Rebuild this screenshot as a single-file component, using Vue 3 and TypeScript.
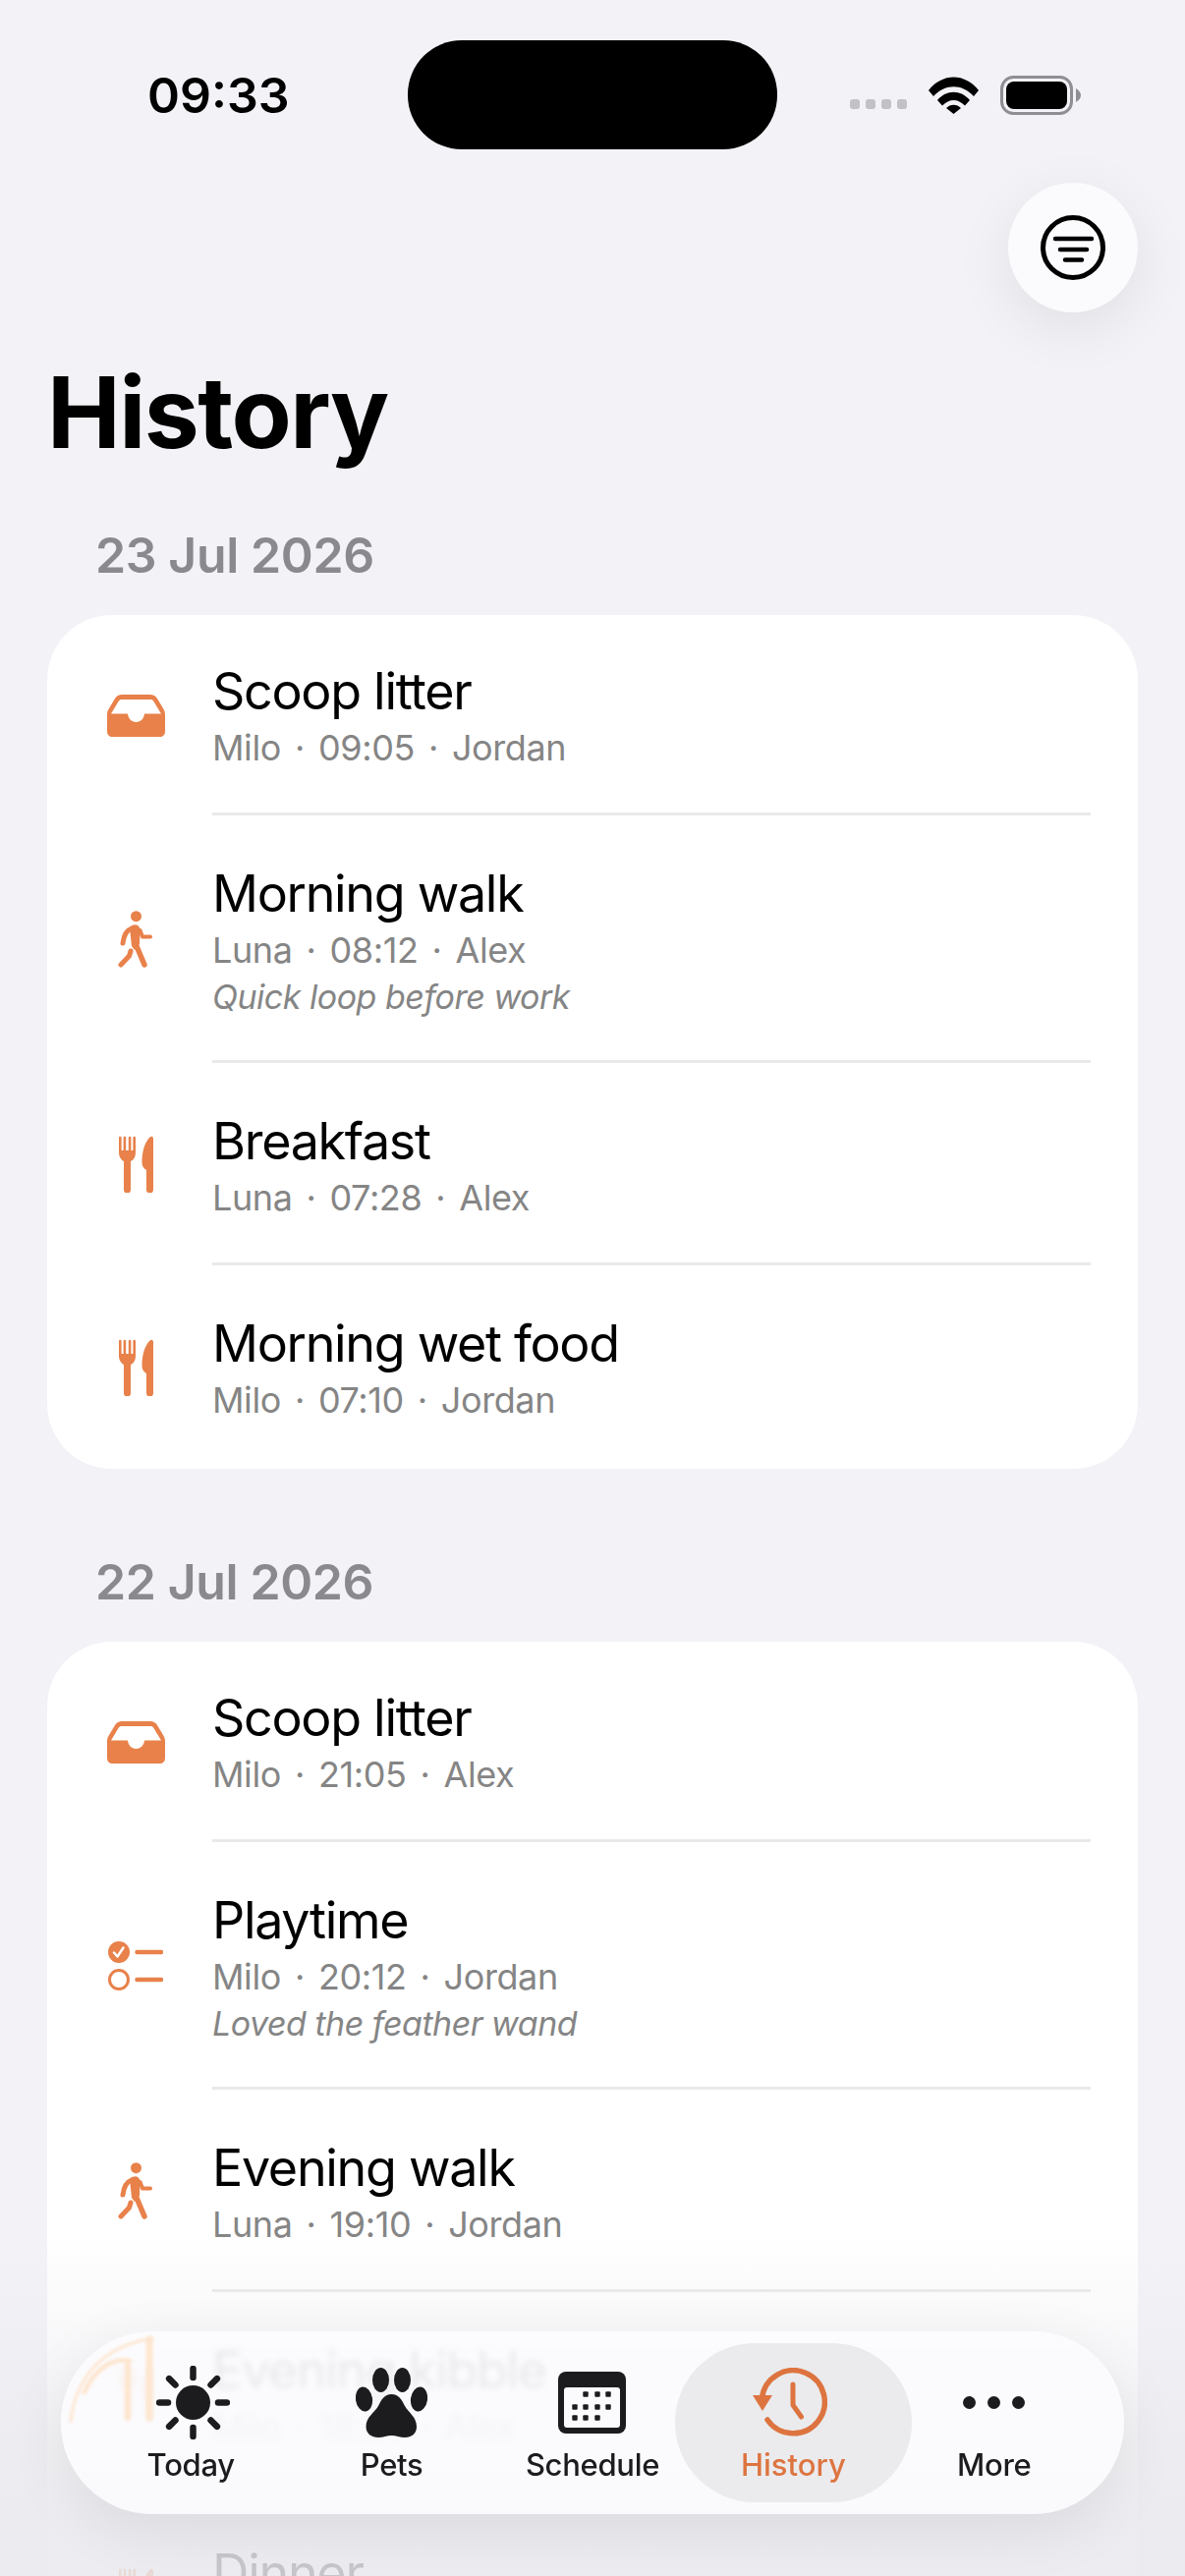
<template>
  <div class="screen">
    <header class="status">
      <span class="clock">09:33</span>
      <div class="island" />
      <div class="status-icons">
        <div class="signal"><i /><i /><i /><i /></div>
        <svg class="wifi" width="51" height="38" viewBox="0 0 51 38">
          <path d="M0 14 C14 -4 37 -4 51 14 L46 20 C34 7 17 7 5 20Z" />
          <path d="M9 24 C18 13 33 13 42 24 L37 29.5 C30 22 21 22 14 29.5Z" />
          <path d="M18 32 C22 27.5 29 27.5 33 32 L25.500 38Z" />
        </svg>
        <svg class="battery" width="82" height="40" viewBox="0 0 82 40">
          <rect x="1.500" y="1.500" width="71" height="37" rx="12" fill="none" stroke="#8f8f93" stroke-width="3" />
          <rect x="6" y="6" width="62" height="28" rx="8" />
          <path d="M77 13 C80 15 82 17 82 20 C82 23 80 25 77 27Z" fill="#8f8f93" />
        </svg>
      </div>
    </header>

    <div class="toolbar">
      <button class="filter-btn">
        <svg width="66" height="66" viewBox="0 0 66 66" fill="none" stroke="#000" stroke-linecap="round">
          <circle cx="33" cy="33" r="30.500" stroke-width="5" />
          <path d="M15 24H52M20 35H47M25 45.500H42" stroke-width="4.500" />
        </svg>
      </button>
    </div>

    <h1 class="title">History</h1>

    <section v-for="day in days" :key="day.date" class="day">
      <h2 class="day-label">{{ day.date }}</h2>
      <div class="card">
        <div v-for="entry in day.entries" :key="entry.title" class="row">
          <div class="row-icon">
            <svg v-if="entry.kind === 'litter'" width="59" height="43" viewBox="0 0 59 43">
              <path fill-rule="evenodd" d="M15 0H44C47 0 49 1 51 4L57 14C58.500 16.500 59 18 59 21V37C59 41 57 43 53 43H6C2 43 0 41 0 37V21C0 18 .5 16.500 2 14L8 4C10 1 12 0 15 0ZM15 5C13.500 5 12.500 5.500 11.500 7L4 19.500H21C21.500 24 24.500 28 29.500 28C34.500 28 37.500 24 38 19.500H55L47.500 7C46.500 5.500 45.500 5 44 5Z" />
            </svg>
            <svg v-else-if="entry.kind === 'walk'" width="36" height="58" viewBox="0 0 36 58">
              <circle cx="18.500" cy="5.700" r="5.500" />
              <path d="M12 17C15 13 22 13 22.500 19L22 34L17 40L14 36Z" />
              <g fill="none" stroke-linecap="round" stroke-linejoin="round">
                <path d="M14 18C8 20 6 25 5 33" stroke-width="5" />
                <path d="M22.500 20L25 26.500H33" stroke-width="4" />
                <path d="M19 36L27 55" stroke-width="5.500" />
                <path d="M13 41L11.500 46L3 55" stroke-width="5" />
              </g>
            </svg>
            <svg v-else-if="entry.kind === 'food'" width="35" height="58" viewBox="0 0 35 58">
              <path d="M0 2V17C0 22 3 25 5 26V55A3.500 3.500 0 0 0 12 55V26C14.500 25 17 22 17 17V2A1.300 1.300 0 0 0 14.400 2V15H12.400V2A1.300 1.300 0 0 0 9.800 2V15H7.200V2A1.300 1.300 0 0 0 4.600 2V15H2.600V2A1.300 1.300 0 0 0 0 2Z" />
              <path d="M35 3C35 1 33 0 31.500 1.500C26 7 23.500 17 23.500 27C23.500 31 25 33 28 35V55A3.500 3.500 0 0 0 35 55Z" />
            </svg>
            <svg v-else width="56" height="50" viewBox="0 0 56 50">
              <circle cx="11" cy="11" r="11" />
              <path d="M6 11.500L9.500 15.500L15.500 6.500" fill="none" stroke="#fff" stroke-width="2.500" stroke-linecap="round" stroke-linejoin="round" />
              <circle cx="11" cy="39" r="9.500" fill="none" stroke-width="3" />
              <path d="M29.500 11H54M29.500 39H54" fill="none" stroke-width="4.500" stroke-linecap="round" />
            </svg>
          </div>
          <div class="row-body">
            <div class="row-title">{{ entry.title }}</div>
            <div class="row-meta">{{ entry.pet }}<span class="dot">·</span>{{ entry.time }}<span class="dot">·</span>{{ entry.who }}</div>
            <div v-if="entry.note" class="row-note">{{ entry.note }}</div>
          </div>
        </div>
      </div>
    </section>

    <div class="fade" />

    <nav class="tabbar">
      <!-- refraction of the fork icon passing under the glass -->
      <svg class="glass-smear" width="110" height="110" viewBox="0 0 110 110" fill="none" stroke="#fde6d0" stroke-linecap="round">
        <path d="M10 92C14 50 40 15 94 7" stroke-width="3" />
        <path d="M24 62C34 38 54 26 70 30" stroke-width="5" />
        <path d="M68 30V88" stroke-width="6" />
        <path d="M90 8V88" stroke-width="7" />
      </svg>
      <div v-for="tab in tabs" :key="tab" class="tab" :class="{ active: tab === 'History' }">
        <div class="tab-icon">
          <svg v-if="tab === 'Today'" class="sun" width="75" height="75" viewBox="0 0 75 75">
            <circle cx="37.500" cy="37.500" r="17.500" />
            <path
              v-for="deg in [0, 45, 90, 135, 180, 225, 270, 315]"
              :key="deg"
              d="M37.500 3V12"
              stroke-width="6.500"
              stroke-linecap="round"
              :transform="`rotate(${deg} 37.500 37.500)`"
            />
          </svg>
          <svg v-else-if="tab === 'Pets'" width="73" height="71" viewBox="0 0 73 71">
            <ellipse cx="25.500" cy="12.500" rx="8.500" ry="12.500" />
            <ellipse cx="47.500" cy="12.500" rx="8.500" ry="12.500" />
            <ellipse cx="8.500" cy="32" rx="8.500" ry="12.500" transform="rotate(-8 8.500 32)" />
            <ellipse cx="64.500" cy="32" rx="8.500" ry="12.500" transform="rotate(8 64.500 32)" />
            <path d="M36.500 27C44 27 47 33 50 39C54 46 62 50 62 60C62 67 57 71 50 71C45 71 41 69 36.500 69C32 69 28 71 23 71C16 71 10.500 67 10.500 60C10.500 50 19 46 23 39C26 33 29 27 36.500 27Z" />
          </svg>
          <svg v-else-if="tab === 'Schedule'" width="69" height="63" viewBox="0 0 69 63">
            <rect width="69" height="63" rx="8" />
            <rect x="6" y="16" width="57" height="41" rx="3" fill="#fbfbfd" />
            <rect v-for="d in calendarDots" :key="d.join()" :x="d[0] - 2.700" :y="d[1] - 2.700" width="5.400" height="5.400" rx="1" />
          </svg>
          <svg v-else-if="tab === 'History'" class="clock-back" width="76" height="70" viewBox="0 0 76 70" fill="none" stroke-linecap="round" stroke-linejoin="round">
            <path d="M15 53A32 32 0 1 0 9.500 31" stroke-width="5.500" />
            <path d="M41 17V38L49.500 50" stroke-width="5" />
            <path d="M0 28H20L10 44Z" class="arrow" stroke="none" />
          </svg>
          <svg v-else width="63" height="13" viewBox="0 0 63 13">
            <circle cx="6.500" cy="6.500" r="6.500" />
            <circle cx="31.500" cy="6.500" r="6.500" />
            <circle cx="56.500" cy="6.500" r="6.500" />
          </svg>
        </div>
        <span class="tab-label">{{ tab }}</span>
      </div>
    </nav>
  </div>
</template>

<script setup lang="ts">
interface Entry {
  kind: 'litter' | 'walk' | 'food' | 'play'
  title: string
  pet: string
  time: string
  who: string
  note?: string
}

const days: { date: string; entries: Entry[] }[] = [
  {
    date: '23 Jul 2026',
    entries: [
      { kind: 'litter', title: 'Scoop litter', pet: 'Milo', time: '09:05', who: 'Jordan' },
      { kind: 'walk', title: 'Morning walk', pet: 'Luna', time: '08:12', who: 'Alex', note: 'Quick loop before work' },
      { kind: 'food', title: 'Breakfast', pet: 'Luna', time: '07:28', who: 'Alex' },
      { kind: 'food', title: 'Morning wet food', pet: 'Milo', time: '07:10', who: 'Jordan' }
    ]
  },
  {
    date: '22 Jul 2026',
    entries: [
      { kind: 'litter', title: 'Scoop litter', pet: 'Milo', time: '21:05', who: 'Alex' },
      { kind: 'play', title: 'Playtime', pet: 'Milo', time: '20:12', who: 'Jordan', note: 'Loved the feather wand' },
      { kind: 'walk', title: 'Evening walk', pet: 'Luna', time: '19:10', who: 'Jordan' },
      { kind: 'food', title: 'Evening kibble', pet: 'Milo', time: '18:30', who: 'Alex' },
      { kind: 'food', title: 'Dinner', pet: 'Luna', time: '18:05', who: 'Alex' }
    ]
  }
]

const tabs = ['Today', 'Pets', 'Schedule', 'History', 'More']

const calendarDots = [
  [28, 23], [40, 23], [51, 23],
  [17, 36], [28, 36], [40, 36], [51, 36],
  [17, 47], [28, 47], [40, 47]
]
</script>

<style>
html,
body {
  margin: 0;
  background: #f2f2f7;
}
</style>

<style scoped>
.screen {
  position: relative;
  width: 1206px;
  height: 2622px;
  overflow: hidden;
  background: #f2f2f7;
  color: #000;
  font-family: Inter, "Liberation Sans", sans-serif;
}

.status {
  display: grid;
  grid-template-columns: 1fr 376px 1fr;
  align-items: center;
  padding-top: 41px;
  height: 111px;
}

.clock {
  padding-left: 150px;
  font-size: 50px;
  font-weight: 600;
}

.island {
  height: 111px;
  border-radius: 55px;
  background: #000;
}

.status-icons {
  display: flex;
  justify-content: flex-end;
  align-items: center;
  padding-right: 106px;
}

.signal {
  display: flex;
  gap: 6px;
  margin: 19px 22px 0 0;
}

.signal i {
  width: 10px;
  height: 10px;
  border-radius: 3px;
  background: #c1c1c6;
}

.wifi {
  margin-right: 22px;
}

.toolbar {
  display: flex;
  justify-content: flex-end;
  padding: 34px 48px 0 0;
}

.filter-btn {
  display: flex;
  align-items: center;
  justify-content: center;
  width: 132px;
  height: 132px;
  padding: 0;
  border: 0;
  border-radius: 50%;
  background: #fbfbfe;
  box-shadow: 0 16px 60px rgba(0, 0, 0, 0.08);
}

.title {
  margin: 42px 0 0 48px;
  font-size: 100px;
  line-height: 120px;
  font-weight: 700;
  letter-spacing: -1.5px;
}

.day-label {
  margin: 55px 0 31px 97px;
  font-size: 50px;
  line-height: 60px;
  font-weight: 600;
  letter-spacing: -0.4px;
  color: #8a8a8e;
}

.day + .day .day-label {
  margin-top: 85px;
}

.card {
  margin: 0 48px;
  border-radius: 66px;
  background: #fff;
}

.row {
  display: flex;
  align-items: center;
  padding-left: 60px;
}

.row-icon {
  display: flex;
  justify-content: center;
  width: 60px;
  margin-right: 48px;
  fill: #e8814a;
  stroke: #e8814a;
  stroke-width: 0;
}

.row-body {
  flex: 1;
  margin-right: 48px;
  padding: 49px 0 42px;
  border-bottom: 3px solid #e9e9eb;
}

.row:first-child .row-body {
  padding-top: 47px;
}

.row:last-child .row-body {
  padding-bottom: 46px;
  border-bottom: 0;
}

.row-title {
  font-size: 52px;
  line-height: 62px;
  letter-spacing: -1.3px;
}

.row-meta {
  margin-top: 3px;
  font-size: 36px;
  line-height: 47px;
  letter-spacing: -0.4px;
  color: #858585;
}

.dot {
  margin: 0 14px;
}

.row-note {
  margin-bottom: -2px;
  font-size: 34px;
  line-height: 48px;
  font-style: italic;
  letter-spacing: -0.5px;
  color: #858585;
}

.fade {
  position: absolute;
  left: 0;
  right: 0;
  bottom: 0;
  height: 350px;
  background: linear-gradient(to bottom, rgba(233, 233, 238, 0), rgba(233, 233, 238, 0.85) 85%);
}

.tabbar {
  position: absolute;
  left: 62px;
  right: 62px;
  bottom: 63px;
  display: grid;
  grid-template-columns: repeat(5, 1fr);
  height: 186px;
  padding: 0 30px;
  box-sizing: border-box;
  border-radius: 93px;
  background: rgba(252, 252, 254, 0.88);
  backdrop-filter: blur(3px);
  box-shadow: 0 16px 60px rgba(0, 0, 0, 0.08);
}

.glass-smear {
  position: absolute;
  left: 0;
  top: 0;
  filter: blur(1.5px);
}

.tab {
  position: relative;
  display: flex;
  flex-direction: column;
  align-items: center;
  color: #1c1c1e;
  fill: #1c1c1e;
  stroke: #1c1c1e;
  stroke-width: 0;
}

.tab.active {
  color: #dd7440;
  stroke: #dd7440;
}

.tab.active::before {
  content: "";
  position: absolute;
  left: -18px;
  right: -18px;
  top: 12px;
  bottom: 12px;
  border-radius: 81px;
  background: #ebebed;
}

.arrow {
  fill: #dd7440;
}

.sun {
  margin-left: 4px;
}

.clock-back {
  margin-left: -7px;
}

.tab-icon {
  position: relative;
  display: flex;
  align-items: center;
  justify-content: center;
  height: 76px;
  margin-top: 34px;
}

.tab-label {
  position: relative;
  margin-top: 7px;
  font-size: 31px;
  line-height: 38px;
  font-weight: 500;
  letter-spacing: -0.3px;
}

.tab.active .tab-label {
  letter-spacing: 0;
}
</style>
